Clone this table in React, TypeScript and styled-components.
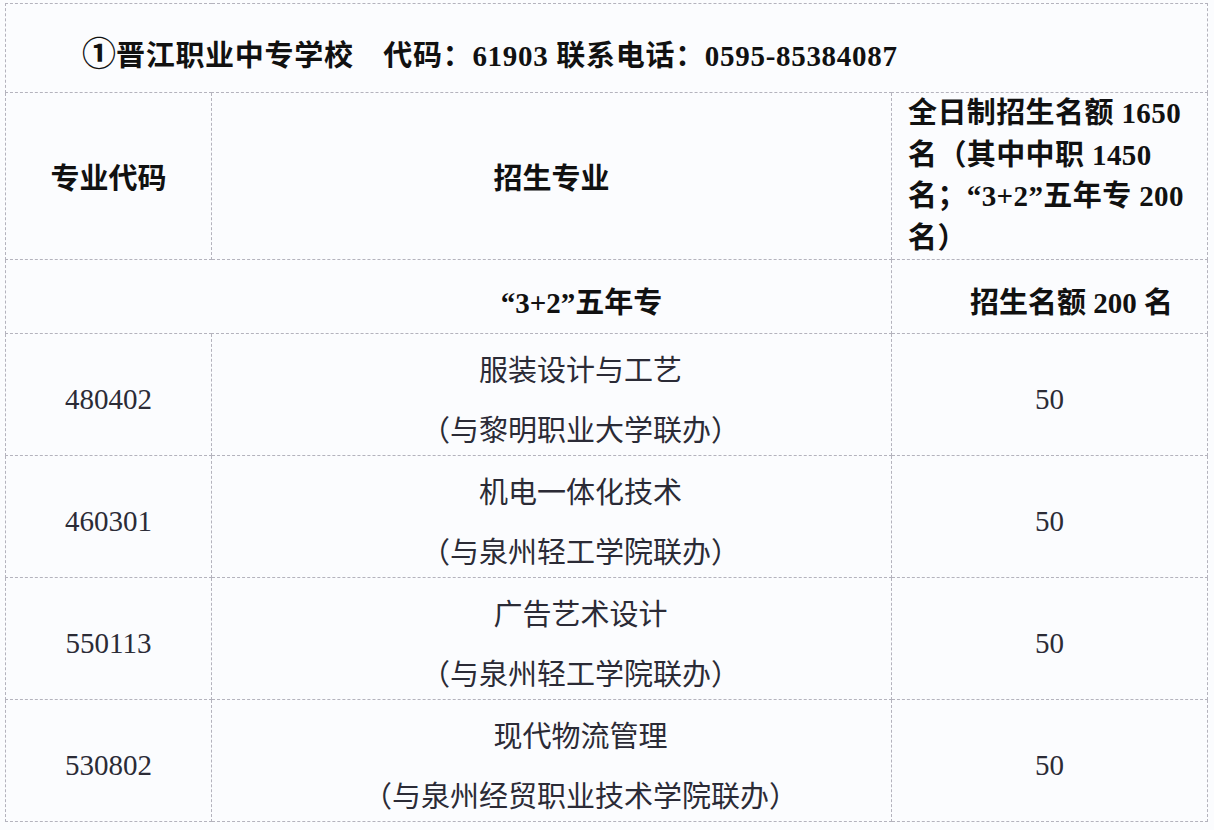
import styled, { createGlobalStyle } from "styled-components";

const GlobalStyle = createGlobalStyle`
	html, body {
		margin: 0;
		padding: 0;
		background: #fbfcfe;
	}
`;

const Page = styled.div`
	padding: 3px 0 0 5px;
	font-family: "Liberation Serif", "Noto Sans CJK SC", serif;
	color: #2b2b36;
`;

const Table = styled.table`
	border-collapse: collapse;
	table-layout: fixed;
	width: 1203px;
	font-size: 29px;
`;

const Cell = styled.td<{ $align?: string; $padLeft?: number; $bold?: boolean }>`
	border: 1px dashed #b4b3bd;
	padding: 0 0 0 ${({ $padLeft }) => $padLeft || 0}px;
	text-align: ${({ $align }) => $align || "center"};
	vertical-align: middle;
	font-weight: ${({ $bold }) => ($bold ? 700 : 400)};
	color: ${({ $bold }) => ($bold ? "#111" : "#2b2b36")};
`;

const TitleRow = styled.tr`
	height: 89px;
`;

const Title = styled.div`
	padding: 6px 0 0 76px;
	font-weight: 700;
	color: #111;
	white-space: nowrap;
	letter-spacing: 0.7px;
`;

const Circle = styled.span`
	font-family: "Noto Sans CJK SC", sans-serif;
	font-size: 34px;
	letter-spacing: 0;
`;

const HeadRow = styled.tr`
	height: 167px;
`;

const SubRow = styled.tr`
	height: 74px;
`;

const BodyRow = styled.tr`
	height: 122px;
`;

const Quota = styled.div`
	line-height: 41.5px;
	padding-left: 16px;
	white-space: nowrap;
	letter-spacing: 0.4px;
`;

const Lines = styled.div`
	box-sizing: border-box;
	height: 121px;
	line-height: 60px;
	padding-top: 7px;
	white-space: nowrap;
`;

const Value = styled.div`
	padding-top: 10px;
`;

const Shift = styled.div`
	padding-top: 6px;
`;

const rows = [
	{ code: "480402", major: "服装设计与工艺", partner: "（与黎明职业大学联办）", count: 50 },
	{ code: "460301", major: "机电一体化技术", partner: "（与泉州轻工学院联办）", count: 50 },
	{ code: "550113", major: "广告艺术设计", partner: "（与泉州轻工学院联办）", count: 50 },
	{ code: "530802", major: "现代物流管理", partner: "（与泉州经贸职业技术学院联办）", count: 50 },
];

export default function App() {
	return (
		<Page>
			<GlobalStyle />
			<Table>
				<colgroup>
					<col style={{ width: 206 }} />
					<col style={{ width: 680 }} />
					<col style={{ width: 316 }} />
				</colgroup>
				<tbody>
					<TitleRow>
						<Cell colSpan={3} $align="left">
							<Title>
								<Circle>①</Circle>晋江职业中专学校　代码：61903 联系电话：0595-85384087
							</Title>
						</Cell>
					</TitleRow>
					<HeadRow>
						<Cell $bold>专业代码</Cell>
						<Cell $bold>招生专业</Cell>
						<Cell $bold $align="left">
							<Quota>
								全日制招生名额 1650
								<br />
								名（其中中职 1450
								<br />
								名；“3+2”五年专 200
								<br />
								名）
							</Quota>
						</Cell>
					</HeadRow>
					<SubRow>
						<Cell $bold colSpan={2} $padLeft={266}>
							<Shift>“3+2”五年专</Shift>
						</Cell>
						<Cell $bold $padLeft={44}>
							<Shift>招生名额 200 名</Shift>
						</Cell>
					</SubRow>
					{rows.map((r) => (
						<BodyRow key={r.code}>
							<Cell>
								<Value>{r.code}</Value>
							</Cell>
							<Cell $padLeft={58}>
								<Lines>
									{r.major}
									<br />
									{r.partner}
								</Lines>
							</Cell>
							<Cell>
								<Value>{r.count}</Value>
							</Cell>
						</BodyRow>
					))}
				</tbody>
			</Table>
		</Page>
	);
}
